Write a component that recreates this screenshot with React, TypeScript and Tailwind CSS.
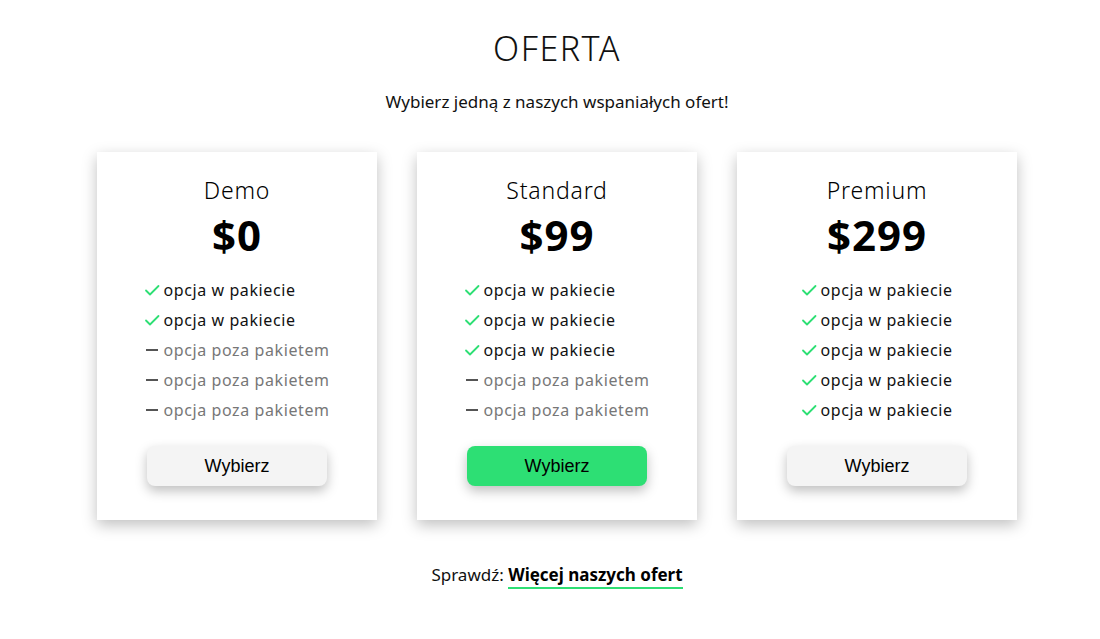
import React from "react";

const Check = () => (
  <svg width="16" height="16" viewBox="0 0 16 16" className="shrink-0">
    <path d="M2 8.5 L6 12.5 L14.5 4" fill="none" stroke="#2ddf74" strokeWidth="1.8" strokeLinecap="round" strokeLinejoin="round" />
  </svg>
);

const Dash = () => (
  <svg width="16" height="16" viewBox="0 0 16 16" className="shrink-0">
    <path d="M2 8 L14 8" stroke="#555" strokeWidth="2" />
  </svg>
);

type Plan = { name: string; price: string; included: number; highlight?: boolean };

const plans: Plan[] = [
  { name: "Demo", price: "$0", included: 2 },
  { name: "Standard", price: "$99", included: 3, highlight: true },
  { name: "Premium", price: "$299", included: 5 },
];

function Card({ plan }: { plan: Plan }) {
  const items = Array.from({ length: 5 }, (_, i) => i < plan.included);
  return (
    <div className="w-[280px] h-[368px] bg-white shadow-[0_5px_14px_rgba(0,0,0,0.25)] flex flex-col items-center pt-[24px]">
      <div className="text-[23px] leading-[28px] font-light tracking-[0.8px] text-black">{plan.name}</div>
      <div className="text-[42px] leading-[50px] font-bold tracking-[1px] text-black mt-[6px]">{plan.price}</div>
      <ul className="mt-[15px] flex flex-col">
        {items.map((ok, i) => (
          <li key={i} className="flex items-center gap-[3px] h-[30px] text-[16px] tracking-[0.6px]">
            {ok ? <Check /> : <Dash />}
            <span className={ok ? "text-[#111]" : "text-[#777]"}>
              {ok ? "opcja w pakiecie" : "opcja poza pakietem"}
            </span>
          </li>
        ))}
      </ul>
      <button
        className={`mt-[21px] w-[180px] h-[40px] rounded-[8px] shadow-[0_5px_12px_rgba(0,0,0,0.25)] text-[18px] text-black ${
          plan.highlight ? "bg-[#2ddf74]" : "bg-[#f4f4f4]"
        }`}
        style={{ fontFamily: "'Liberation Sans', Arial, sans-serif" }}
      >
        Wybierz
      </button>
    </div>
  );
}

export default function App() {
  return (
    <div
      className="w-[1100px] h-[639px] bg-white flex flex-col items-center pl-[14px] text-[#111]"
      style={{ fontFamily: "'Noto Sans', 'DejaVu Sans', sans-serif" }}
    >
      <h1 className="mt-[28px] text-[34px] leading-[40px] font-light tracking-[1.5px]">OFERTA</h1>
      <p className="mt-[22px] text-[17px] leading-[24px]">Wybierz jedną z naszych wspaniałych ofert!</p>
      <div className="mt-[38px] flex gap-[40px]">
        {plans.map((p) => (
          <Card key={p.name} plan={p} />
        ))}
      </div>
      <div className="mt-[43px] text-[17px] leading-[24px]">
        Sprawdź:{" "}
        <a className="font-bold text-black border-b-2 border-[#2ddf74] pb-[1px]">Więcej naszych ofert</a>
      </div>
    </div>
  );
}
